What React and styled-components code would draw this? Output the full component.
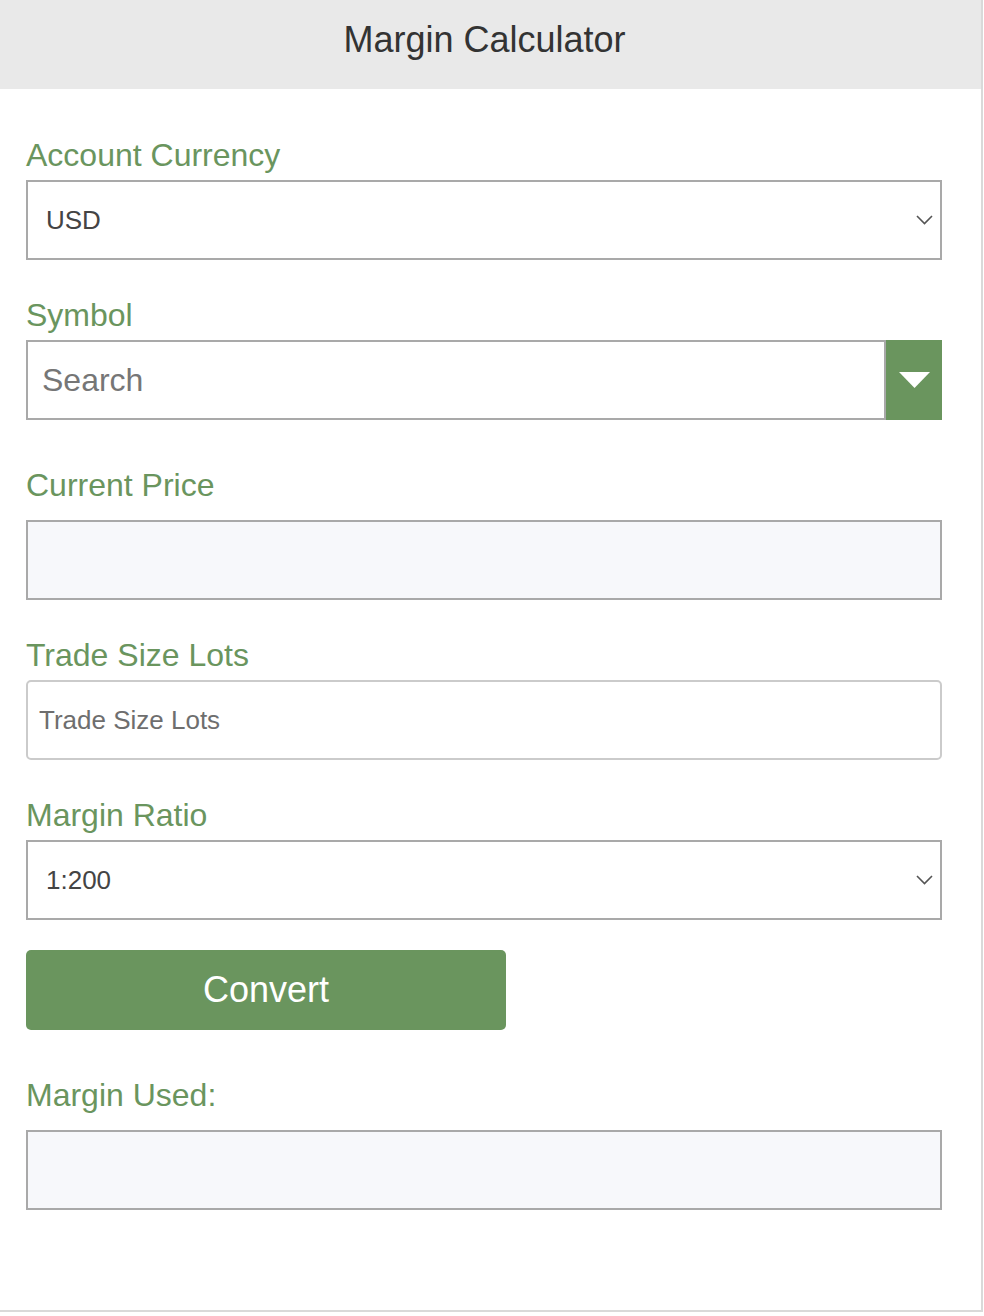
import React from "react";
import styled, { createGlobalStyle } from "styled-components";

const GREEN = "#6a955e";

const Global = createGlobalStyle`
  html, body { margin: 0; padding: 0; background: #fff; }
  * { box-sizing: border-box; }
  body { font-family: "Liberation Sans", Arial, sans-serif; }
`;

const Card = styled.div`
  width: 983px;
  height: 1312px;
  border-right: 2px solid #d9d9d9;
  border-bottom: 2px solid #d9d9d9;
  background: #fff;
  display: flex;
  flex-direction: column;
`;

const Header = styled.header`
  height: 89px;
  background: #e9e9e9;
  padding: 20px 12px 0 0;
  text-align: center;
  flex-shrink: 0;
`;

const Title = styled.h1`
  margin: 0;
  font-size: 36px;
  line-height: 40px;
  font-weight: 400;
  color: #333;
`;

const Form = styled.form`
  display: flex;
  flex-direction: column;
  padding: 11px 40px 0 26px;
`;

const Field = styled.div`
  display: flex;
  flex-direction: column;
  margin-top: ${(p) => (p.$output ? 45 : 35)}px;
  gap: ${(p) => (p.$output ? 15 : 5)}px;
`;

const Label = styled.label`
  font-size: 32px;
  line-height: 40px;
  color: ${GREEN};
  font-weight: 400;
`;

const SelectWrap = styled.div`
  position: relative;
  width: 916px;
  height: 80px;
`;

const Select = styled.select`
  appearance: none;
  -webkit-appearance: none;
  width: 100%;
  height: 100%;
  border: 2px solid #a9a9a9;
  border-radius: 0;
  background: #fff;
  padding: 0 40px 0 18px;
  font-family: inherit;
  font-size: 26px;
  color: #444;
  outline: none;
`;

const Chevron = styled.svg`
  position: absolute;
  right: 9px;
  top: 35px;
  pointer-events: none;
`;

const Combo = styled.div`
  display: flex;
  width: 916px;
  height: 80px;
`;

const SearchInput = styled.input`
  flex: 1;
  min-width: 0;
  height: 100%;
  border: 2px solid #a9a9a9;
  border-radius: 0;
  padding: 0 14px;
  font-family: inherit;
  font-size: 32px;
  color: #333;
  outline: none;
  &::placeholder { color: #767676; }
`;

const ComboButton = styled.button`
  width: 56px;
  height: 100%;
  border: none;
  background: ${GREEN};
  display: flex;
  align-items: center;
  justify-content: center;
  padding: 0;
  cursor: pointer;
`;

const OutputBox = styled.input`
  width: 916px;
  height: 80px;
  border: 2px solid #a9a9a9;
  border-radius: 0;
  background: #f7f8fb;
  padding: 0 14px;
  font-family: inherit;
  font-size: 26px;
  outline: none;
`;

const TextInput = styled.input`
  width: 916px;
  height: 80px;
  border: 2px solid #cbcbcb;
  border-radius: 5px;
  background: #fff;
  padding: 0 11px;
  font-family: inherit;
  font-size: 26px;
  color: #333;
  outline: none;
  &::placeholder { color: #6e6e6e; }
`;

const ConvertButton = styled.button`
  margin-top: 30px;
  width: 480px;
  height: 80px;
  border: none;
  border-radius: 5px;
  background: ${GREEN};
  color: #fff;
  font-family: inherit;
  font-size: 36px;
  cursor: pointer;
`;

const ChevronIcon = () => (
  <Chevron width="17" height="10" viewBox="0 0 17 10">
    <path d="M1 1 L8.5 8.5 L16 1" fill="none" stroke="#555" strokeWidth="1.6" />
  </Chevron>
);

export default function App() {
  return (
    <>
      <Global />
      <Card>
        <Header>
          <Title>Margin Calculator</Title>
        </Header>
        <Form onSubmit={(e) => e.preventDefault()}>
          <Field>
            <Label>Account Currency</Label>
            <SelectWrap>
              <Select defaultValue="USD">
                <option>USD</option>
                <option>EUR</option>
                <option>GBP</option>
              </Select>
              <ChevronIcon />
            </SelectWrap>
          </Field>
          <Field>
            <Label>Symbol</Label>
            <Combo>
              <SearchInput placeholder="Search" />
              <ComboButton type="button">
                <svg width="31" height="16" viewBox="0 0 31 16">
                  <polygon points="0,0 31,0 15.5,16" fill="#fff" />
                </svg>
              </ComboButton>
            </Combo>
          </Field>
          <Field $output>
            <Label>Current Price</Label>
            <OutputBox readOnly />
          </Field>
          <Field>
            <Label>Trade Size Lots</Label>
            <TextInput placeholder="Trade Size Lots" />
          </Field>
          <Field>
            <Label>Margin Ratio</Label>
            <SelectWrap>
              <Select defaultValue="1:200">
                <option>1:100</option>
                <option>1:200</option>
                <option>1:500</option>
              </Select>
              <ChevronIcon />
            </SelectWrap>
          </Field>
          <ConvertButton type="submit">Convert</ConvertButton>
          <Field $output>
            <Label>Margin Used:</Label>
            <OutputBox readOnly />
          </Field>
        </Form>
      </Card>
    </>
  );
}
